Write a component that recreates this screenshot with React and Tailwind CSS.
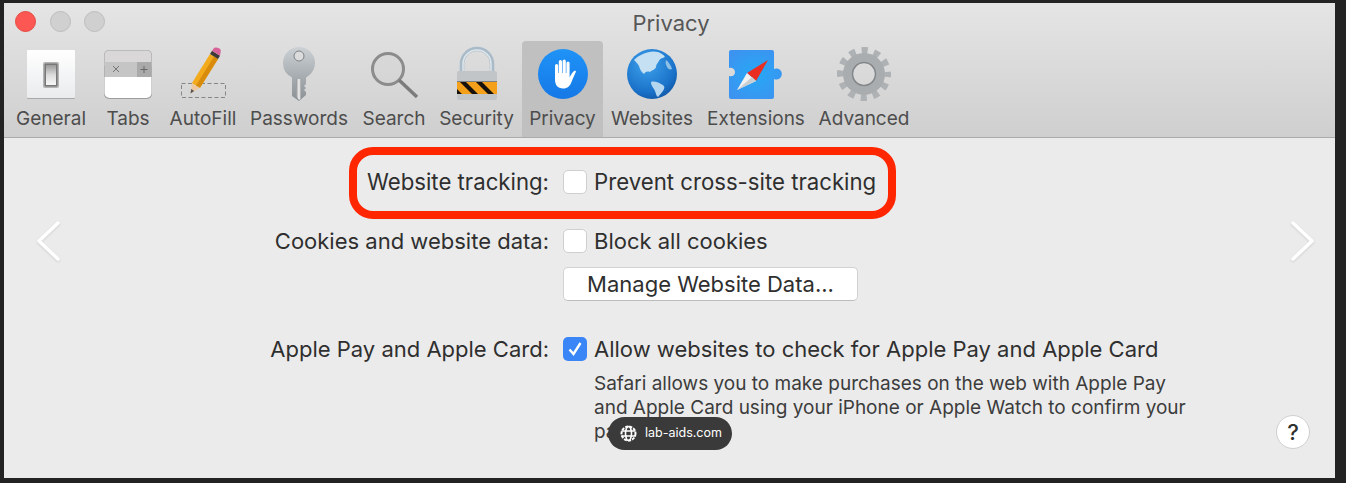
import React from 'react';

const GeneralIcon = () => (
  <svg width="64" height="56" viewBox="0 0 64 56">
    <defs>
      <linearGradient id="generalBg" x1="0" y1="0" x2="0" y2="1">
        <stop offset="0" stopColor="#ffffff" />
        <stop offset="1" stopColor="#e9ebed" />
      </linearGradient>
      <linearGradient id="switchBg" x1="0" y1="0" x2="0" y2="1">
        <stop offset="0" stopColor="#9a9a9a" />
        <stop offset="0.5" stopColor="#dcdcdc" />
        <stop offset="1" stopColor="#f7f7f7" />
      </linearGradient>
    </defs>
    <rect x="8" y="5" width="48" height="48" rx="1" fill="#a9a9a9" />
    <rect x="8" y="4" width="48" height="48" rx="1" fill="url(#generalBg)" />
    <rect x="24" y="16" width="16" height="26" rx="2" fill="#b4b4b4" />
    <rect x="25.5" y="17.5" width="13" height="23" rx="1" fill="#777777" />
    <rect x="27" y="19" width="10" height="20" fill="url(#switchBg)" />
  </svg>
);

const TabsIcon = () => (
  <svg width="64" height="56" viewBox="0 0 64 56">
    <rect x="8" y="4" width="48" height="49" rx="5" fill="#9e9e9e" />
    <path d="M8.5 20V9a4.5 4.5 0 0 1 4.5-4.5h38A4.5 4.5 0 0 1 55.5 9v11z" fill="#d9d7d8" />
    <rect x="8.5" y="16" width="47" height="15" fill="#c5c5c5" />
    <rect x="41" y="16" width="14.5" height="15" fill="#aaaaaa" />
    <path d="M8.5 31h47v16a5 5 0 0 1-5 5h-37a5 5 0 0 1-5-5z" fill="#ffffff" />
    <path d="M17 20l6 6M23 20l-6 6" stroke="#777" strokeWidth="1" fill="none" />
    <path d="M48 20v7M44.5 23.5h7" stroke="#666" strokeWidth="1" fill="none" />
  </svg>
);

const AutoFillIcon = () => (
  <svg width="64" height="56" viewBox="0 0 64 56">
    <rect x="10.5" y="37.5" width="44" height="14" fill="none" stroke="#868686" strokeWidth="1" strokeDasharray="4 2.5" />
    <path d="M19.5 47.5l1.5-10.5 8 4.8z" fill="#eec9a0" />
    <path d="M19.5 47.5l.7-4.4 3 1.8z" fill="#555" />
    <path d="M21 37L39 8l8 5-18 28.8z" fill="#f3aa1b" />
    <path d="M25 39.4L43 10.5l4 2.5-18 28.8z" fill="#d98c0c" />
    <path d="M39 8l2-3.2 8 5L47 13z" fill="#3d3a38" />
    <path d="M41 4.8l1.8-2.6c1-1.4 7-.2 7 2.6L49 9.8z" fill="#d8639b" />
  </svg>
);

const KeyIcon = () => (
  <svg width="64" height="56" viewBox="0 0 64 56">
    <defs>
      <linearGradient id="keyBg" x1="0" y1="0" x2="0" y2="1">
        <stop offset="0" stopColor="#ccd1d5" />
        <stop offset="0.6" stopColor="#a4a9ad" />
        <stop offset="1" stopColor="#8c9196" />
      </linearGradient>
      <linearGradient id="shaftBg" x1="0" y1="0" x2="1" y2="0">
        <stop offset="0" stopColor="#8d8f91" />
        <stop offset="0.6" stopColor="#f4f4f4" />
        <stop offset="1" stopColor="#9a9c9e" />
      </linearGradient>
    </defs>
    <path d="M16 17a16 16 0 1 1 23 14.4V38l-2 2 2 2-2 2 2 2v3l-7 6-7-5V31.4A16 16 0 0 1 16 17z" fill="url(#keyBg)" />
    <circle cx="32" cy="10" r="5" fill="#dcdcdc" stroke="#7d8286" strokeWidth="1" />
    <path d="M29 33h5v20l-2 1-3-4z" fill="url(#shaftBg)" />
  </svg>
);

const SearchIcon = () => (
  <svg width="64" height="56" viewBox="0 0 64 56">
    <circle cx="26" cy="23" r="15.5" fill="#d2d2d2" fillOpacity="0.4" stroke="#8c8c8c" strokeWidth="3" />
    <path d="M37 34l18 17" stroke="#7c7c7c" strokeWidth="3.5" fill="none" />
  </svg>
);

const SecurityIcon = () => (
  <svg width="64" height="56" viewBox="0 0 64 56">
    <defs>
      <clipPath id="lockStripe">
        <rect x="12" y="35" width="40" height="13" />
      </clipPath>
    </defs>
    <path d="M17 26V18a15 15 0 0 1 30 0v8" fill="none" stroke="#a9bbc9" strokeWidth="4.5" />
    <path d="M18 26V18a14 14 0 0 1 28 0v8" fill="none" stroke="#dfe6ea" strokeWidth="1.5" />
    <rect x="12" y="25" width="40" height="29" rx="2" fill="#c2c5c7" />
    <rect x="12" y="35" width="40" height="13" fill="#f5a01a" />
    <g clipPath="url(#lockStripe)">
      <path d="M14 35h6l13 13h-6zM30 35h6l13 13h-6zM2 35h2l13 13h-6z" fill="#17120c" />
    </g>
    <rect x="12" y="35" width="40" height="1" fill="#7f7f7f" />
  </svg>
);

const PrivacyIcon = () => (
  <svg width="64" height="56" viewBox="0 0 64 56">
    <defs>
      <linearGradient id="privacyBg" x1="0" y1="0" x2="0" y2="1">
        <stop offset="0" stopColor="#1f93f7" />
        <stop offset="1" stopColor="#1578e6" />
      </linearGradient>
    </defs>
    <circle cx="32" cy="28" r="25" fill="url(#privacyBg)" />
    <path
      d="M24 33V19.5a1.6 1.6 0 0 1 3.2 0V27h.6V15.5a1.6 1.6 0 0 1 3.2 0V27h.6V15a1.6 1.6 0 0 1 3.2 0V27h.6V17a1.6 1.6 0 0 1 3.2 0V31.5c1-2.2 2.6-5 4.2-6.3 1-.8 2.5-.4 2 .9-1.3 2.8-2.8 6.2-4.4 10.1-1.4 3.6-3.6 6.3-8.4 6.3-5.4 0-8-3.4-8-9.5z"
      fill="#ffffff"
    />
  </svg>
);

const WebsitesIcon = () => (
  <svg width="64" height="56" viewBox="0 0 64 56">
    <defs>
      <radialGradient id="globeBg" cx="0.4" cy="0.3" r="0.8">
        <stop offset="0" stopColor="#3fa2ec" />
        <stop offset="0.7" stopColor="#1a72c9" />
        <stop offset="1" stopColor="#0d4f9c" />
      </radialGradient>
    </defs>
    <circle cx="32" cy="28" r="25" fill="url(#globeBg)" />
    <path d="M14 14c6-6 16-10 24-8 3 1 6 3 7 5-2 1-5 1-6 4-1 2-3 3-3 6-1 3-4 3-6 5-3-1-5 0-6 2-3-2-4-5-5-8-1-2-3-4-5-6z" fill="#c6e0f3" />
    <path d="M31 36c3-1 7 0 10 2 3 1 4 3 3 5-1 3-4 5-6 8-2-1-2-4-3-6-1-3-4-5-4-9z" fill="#b4d6ef" />
    <path d="M46 14c3 2 5 6 6 9-2 1-4 0-5-2s-2-5-1-7z" fill="#8fc0e6" />
  </svg>
);

const ExtensionsIcon = () => (
  <svg width="64" height="56" viewBox="0 0 64 56">
    <defs>
      <radialGradient id="extensionBg" cx="0.5" cy="0.5" r="0.6">
        <stop offset="0" stopColor="#25a9f7" />
        <stop offset="1" stopColor="#3c93f0" />
      </radialGradient>
    </defs>
    <path
      d="M7 4h41a2 2 0 0 1 2 2v17a5.5 5.5 0 1 1 0 10v18a2 2 0 0 1-2 2H7a2 2 0 0 1-2-2V30c4 1 6-1 6-4s-3-5-6-4V6a2 2 0 0 1 2-2z"
      fill="url(#extensionBg)"
    />
    <path d="M44 14L32 35 23 27z" fill="#ea2d22" />
    <path d="M13 44L23 27l9 8z" fill="#f2f2f2" />
    <path d="M13 44L28 31l4 4z" fill="#c9ced3" />
  </svg>
);

const AdvancedIcon = () => (
  <svg width="64" height="56" viewBox="0 0 64 56">
    <circle cx="32" cy="28" r="23.5" fill="none" stroke="#aeb2b5" strokeWidth="7" strokeDasharray="6.15 6.15" strokeDashoffset="3.07" />
    <circle cx="32" cy="28" r="16" fill="none" stroke="#a9adb0" strokeWidth="10" />
    <circle cx="32" cy="28" r="11.5" fill="none" stroke="#83878a" strokeWidth="1.5" />
  </svg>
);

const tabs = [
  { label: 'General', Icon: GeneralIcon, width: 'w-[80px]' },
  { label: 'Tabs', Icon: TabsIcon, width: 'w-[74px]' },
  { label: 'AutoFill', Icon: AutoFillIcon, width: 'w-[76px]' },
  { label: 'Passwords', Icon: KeyIcon, width: 'w-[116px]' },
  { label: 'Search', Icon: SearchIcon, width: 'w-[74px]' },
  { label: 'Security', Icon: SecurityIcon, width: 'w-[91px]' },
  { label: 'Privacy', Icon: PrivacyIcon, width: 'w-[81px]', active: true },
  { label: 'Websites', Icon: WebsitesIcon, width: 'w-[98px]' },
  { label: 'Extensions', Icon: ExtensionsIcon, width: 'w-[110px]' },
  { label: 'Advanced', Icon: AdvancedIcon, width: 'w-[106px]' },
];

const Checkbox = ({ checked }) => (
  <div
    className={
      checked
        ? 'w-[24px] h-[24px] shrink-0 rounded-[5px] bg-[#3b86f7] flex items-center justify-center'
        : 'w-[24px] h-[24px] shrink-0 rounded-[5px] bg-white border border-[#cfcfcf]'
    }
  >
    {checked && (
      <svg width="18" height="18" viewBox="0 0 18 18">
        <path d="M3.5 9.5l4 4.5 7-11" fill="none" stroke="#ffffff" strokeWidth="2.4" />
      </svg>
    )}
  </div>
);

const App = () => {
  return (
    <div
      className="w-[1346px] h-[483px] bg-[#232323] pt-[3px] pl-[4px] overflow-hidden"
      style={{ fontFamily: 'Inter, "Liberation Sans", sans-serif' }}
    >
      <div className="relative w-[1331px] h-[475px] bg-[#ebebeb] flex flex-col">
        {/* Toolbar */}
        <div className="h-[135px] bg-gradient-to-b from-[#e5e5e5] to-[#cfcfcf] border-b border-[#ababab] flex flex-col">
          <div className="h-[38px] relative flex items-center justify-center">
            <div className="absolute left-[11px] top-[8px] flex gap-[13.5px]">
              <div className="w-[21px] h-[21px] rounded-full bg-[#fc5753] border border-[#e5483f]" />
              <div className="w-[21px] h-[21px] rounded-full bg-[#d0d0d0] border border-[#bdbdbd]" />
              <div className="w-[21px] h-[21px] rounded-full bg-[#d0d0d0] border border-[#bdbdbd]" />
            </div>
            <span className="text-[22px] text-[#575757] pt-[3px] pl-[3px]">Privacy</span>
          </div>
          <div className="flex flex-1 pl-[7px]">
            {tabs.map(({ label, Icon, width, active }) => (
              <div
                key={label}
                className={`${width} ${active ? 'bg-[#c0c0c0] rounded-t-[4px]' : ''} flex flex-col items-center pt-[5px]`}
              >
                <Icon />
                <span className="text-[19px] leading-[24px] mt-[5px] text-[#4d4d4d] whitespace-nowrap">{label}</span>
              </div>
            ))}
          </div>
        </div>

        {/* Settings form */}
        <div className="grid grid-cols-[545px_1fr] gap-x-[14px] pt-[32px] text-[22px] leading-[24px] text-[#2f2f2f]">
          <div className="text-right text-[22.2px]">Website tracking:</div>
          <div className="flex items-center gap-[7px]">
            <Checkbox />
            <span className="text-[22.2px]">Prevent cross-site tracking</span>
          </div>

          <div className="text-right mt-[35px]">Cookies and website data:</div>
          <div className="flex items-center gap-[7px] mt-[35px]">
            <Checkbox />
            <span>Block all cookies</span>
          </div>

          <div />
          <div className="mt-[14px]">
            <button className="w-[295px] h-[34px] bg-white rounded-[5px] border border-[#d2d2d2] border-b-[#bdbdbd] text-center text-[#2f2f2f]">
              Manage Website Data...
            </button>
          </div>

          <div className="text-right mt-[36px]">Apple Pay and Apple Card:</div>
          <div className="flex items-center gap-[7px] mt-[36px]">
            <Checkbox checked />
            <span>Allow websites to check for Apple Pay and Apple Card</span>
          </div>

          <div />
          <p className="mt-[11px] pl-[31px] w-[631px] text-[19px] leading-[24px] text-[#3c3c3c]">
            Safari allows you to make purchases on the web with Apple Pay and Apple Card using your iPhone or Apple Watch to confirm your payment.
          </p>
        </div>

        {/* Annotation ring */}
        <div className="absolute left-[345px] top-[144px] w-[547px] h-[72px] rounded-[24px] border-[8px] border-[#ff2600]" />

        {/* Side arrows */}
        <svg className="absolute left-[29px] top-[216px] drop-shadow-[0_1px_1px_rgba(0,0,0,0.12)]" width="30" height="44" viewBox="0 0 30 44">
          <path d="M25 4L6 22l19 18" fill="none" stroke="#ffffff" strokeWidth="3.5" strokeLinecap="round" strokeLinejoin="round" />
        </svg>
        <svg className="absolute left-[1284px] top-[216px] drop-shadow-[0_1px_1px_rgba(0,0,0,0.12)]" width="30" height="44" viewBox="0 0 30 44">
          <path d="M5 4l19 18L5 40" fill="none" stroke="#ffffff" strokeWidth="3.5" strokeLinecap="round" strokeLinejoin="round" />
        </svg>

        {/* Help button */}
        <div className="absolute left-[1272px] top-[412px] w-[34px] h-[34px] rounded-full bg-white border border-[#cfcfcf] flex items-center justify-center text-[22px] font-medium text-[#2f2f2f]">
          ?
        </div>

        {/* Domain chip */}
        <div className="absolute left-[604px] top-[414px] w-[124px] h-[33px] rounded-full bg-[#3a3a3a] flex items-center pl-[12px] gap-[8px] text-[12.5px] text-white">
          <svg width="17" height="17" viewBox="0 0 17 17" fill="none" stroke="#ffffff">
            <circle cx="8.5" cy="8.5" r="7" strokeWidth="2" strokeDasharray="3 1.2" />
            <ellipse cx="8.5" cy="8.5" rx="3" ry="7" strokeWidth="1.6" />
            <path d="M1.5 6h14M1.5 11h14" strokeWidth="1.6" />
          </svg>
          <span>lab-aids.com</span>
        </div>
      </div>
    </div>
  );
};

export default App;
